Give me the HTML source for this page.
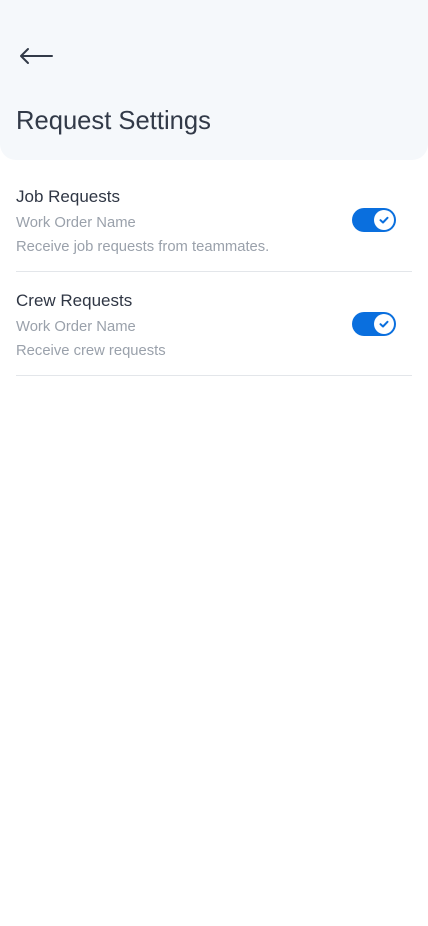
<!DOCTYPE html>
<html><head><meta charset="utf-8"><style>
*{margin:0;padding:0;box-sizing:border-box}
body{width:428px;height:926px;background:#fff;font-family:"Liberation Sans",sans-serif;position:relative;overflow:hidden}
.hdr{position:absolute;left:0;top:0;width:428px;height:160px;background:#f5f8fb;border-radius:0 0 16px 16px}
.arrow{position:absolute;left:18px;top:45px}
.title{position:absolute;left:16px;top:106px;font-size:25.6px;color:#323a48;line-height:30px}
.sec{position:absolute;left:16px;width:396px;height:88px;border-bottom:1px solid #e3e6ea}
.h{position:absolute;left:0;top:1px;font-size:17px;color:#2f3644;line-height:24px}
.s{position:absolute;left:0;font-size:14.8px;color:#9aa1ab;line-height:20px}
.tg{position:absolute;left:336px;top:24px;width:44px;height:24px;border-radius:12px;background:#0a6fde}
.kn{position:absolute;right:2px;top:2px;width:20px;height:20px;border-radius:50%;background:#fff}
</style></head><body>
<div class="hdr">
<svg class="arrow" width="36" height="22" viewBox="0 0 36 22"><path d="M3 11H34M10 4L3 11L10 18" fill="none" stroke="#323a48" stroke-width="2" stroke-linecap="round" stroke-linejoin="round"/></svg>
<div class="title">Request Settings</div>
</div>
<div class="sec" style="top:184px">
<div class="h">Job Requests</div>
<div class="s" style="top:29px">Work Order Name</div>
<div class="s" style="top:53px">Receive job requests from teammates.</div>
<div class="tg"><div class="kn"><svg width="20" height="20" viewBox="0 0 20 20"><path d="M6.5 10.2L9 12.5L13.5 7.8" fill="none" stroke="#0a6fde" stroke-width="2" stroke-linecap="round" stroke-linejoin="round"/></svg></div></div>
</div>
<div class="sec" style="top:288px">
<div class="h">Crew Requests</div>
<div class="s" style="top:29px">Work Order Name</div>
<div class="s" style="top:53px">Receive crew requests</div>
<div class="tg"><div class="kn"><svg width="20" height="20" viewBox="0 0 20 20"><path d="M6.5 10.2L9 12.5L13.5 7.8" fill="none" stroke="#0a6fde" stroke-width="2" stroke-linecap="round" stroke-linejoin="round"/></svg></div></div>
</div>
</body></html>
